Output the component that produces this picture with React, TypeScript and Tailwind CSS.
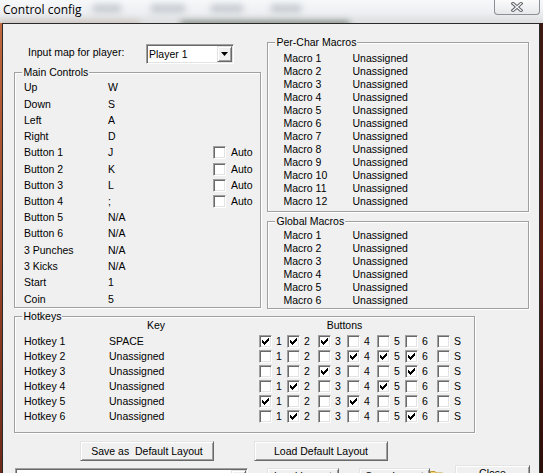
import React from "react";

function Check({ on }: { on?: boolean }) {
  return (
    <div className="relative w-[13px] h-[13px] shrink-0 bg-white border border-t-[#a0a0a0] border-l-[#a0a0a0] border-r-white border-b-white shadow-[inset_1px_1px_0_#696969,inset_-1px_-1px_0_#e3e3e3]">
      {on && (
        <svg className="absolute left-[2px] top-[2px]" width="7" height="7" viewBox="0 0 7 7" shapeRendering="crispEdges">
          <rect x="6" y="0" width="1" height="1" fill="#000" />
          <rect x="5" y="1" width="2" height="1" fill="#000" />
          <rect x="0" y="2" width="1" height="1" fill="#000" />
          <rect x="4" y="2" width="3" height="1" fill="#000" />
          <rect x="0" y="3" width="2" height="1" fill="#000" />
          <rect x="3" y="3" width="3" height="1" fill="#000" />
          <rect x="0" y="4" width="5" height="1" fill="#000" />
          <rect x="1" y="5" width="3" height="1" fill="#000" />
          <rect x="2" y="6" width="1" height="1" fill="#000" />
        </svg>
      )}
    </div>
  );
}

function GroupBox({ title, className, children }: { title: string; className: string; children?: React.ReactNode }) {
  return (
    <div className={"relative border border-[#a0a0a0] shadow-[inset_1px_1px_0_#fff,1px_1px_0_#fff] " + className}>
      <span className="absolute left-[7px] top-[-7px] pl-[1.5px] pr-[1px] bg-[#f0f0f0] leading-[13px] whitespace-nowrap">{title}</span>
      {children}
    </div>
  );
}

function DropBtn() {
  return (
    <div className="mt-[1px] mr-[1px] w-[15px] h-[16px] flex items-center justify-center bg-[#f0f0f0] border border-t-[#e3e3e3] border-l-[#e3e3e3] border-r-[#696969] border-b-[#696969] shadow-[inset_1px_1px_0_#fff,inset_-1px_-1px_0_#a0a0a0]">
      <svg width="7" height="4" viewBox="0 0 7 4">
        <path d="M0 0 H7 L3.5 4 Z" fill="#000" />
      </svg>
    </div>
  );
}

function Combo({ text, className }: { text: string; className: string }) {
  return (
    <div className={"flex bg-white border border-t-[#a0a0a0] border-l-[#a0a0a0] border-r-white border-b-white shadow-[inset_1px_1px_0_#696969,inset_-1px_-1px_0_#e3e3e3] " + className}>
      <div className="flex-1 pl-[2px] pt-[3px] whitespace-nowrap">{text}</div>
      <DropBtn />
    </div>
  );
}

function PushBtn({ label, className }: { label: string; className: string }) {
  return (
    <div className={"flex justify-center bg-[#f0f0f0] border border-t-[#e3e3e3] border-l-[#e3e3e3] border-r-[#696969] border-b-[#696969] shadow-[inset_1px_1px_0_#fff,inset_-1px_-1px_0_#a0a0a0] whitespace-pre " + className}>
      {label}
    </div>
  );
}

const mainRows: { l: string; k: string; auto?: boolean; tall?: boolean }[] = [
  { l: "Up", k: "W", tall: true },
  { l: "Down", k: "S" },
  { l: "Left", k: "A" },
  { l: "Right", k: "D" },
  { l: "Button 1", k: "J", auto: true, tall: true },
  { l: "Button 2", k: "K", auto: true },
  { l: "Button 3", k: "L", auto: true },
  { l: "Button 4", k: ";", auto: true },
  { l: "Button 5", k: "N/A" },
  { l: "Button 6", k: "N/A", tall: true },
  { l: "3 Punches", k: "N/A" },
  { l: "3 Kicks", k: "N/A" },
  { l: "Start", k: "1", tall: true },
  { l: "Coin", k: "5" },
];

const hotkeys: [string, string, number[]][] = [
  ["Hotkey 1", "SPACE", [1, 1, 1, 0, 0, 0, 0]],
  ["Hotkey 2", "Unassigned", [0, 0, 0, 1, 1, 1, 0]],
  ["Hotkey 3", "Unassigned", [0, 0, 1, 0, 0, 1, 0]],
  ["Hotkey 4", "Unassigned", [0, 1, 0, 0, 1, 0, 0]],
  ["Hotkey 5", "Unassigned", [1, 0, 0, 1, 0, 0, 0]],
  ["Hotkey 6", "Unassigned", [0, 1, 0, 0, 0, 1, 0]],
];

const cellW = ["w-[28px]", "w-[31px]", "w-[29px]", "w-[30px]", "w-[28px]", "w-[32px]", "w-[20px]"];
const digits = ["1", "2", "3", "4", "5", "6", "S"];

export default function App() {
  const perChar = Array.from({ length: 12 }, (_, i) => i + 1);
  const global = Array.from({ length: 6 }, (_, i) => i + 1);
  return (
    <div className="relative w-[543px] h-[473px] overflow-hidden bg-[#f0f0f0] font-['Liberation_Sans',Arial,sans-serif] text-[10.5px] leading-[13px] text-black">
      {/* title bar */}
      <div className="relative flex h-[23px] overflow-hidden bg-gradient-to-b from-[#f6f8fa] via-[#eef0f3] to-[#dcdedf]">
        <div className="absolute left-[92px] top-[4px] w-[30px] h-[9px] rounded-full bg-[#a4aab2] opacity-50 blur-[3px]" />
        <div className="absolute left-[150px] top-[4px] w-[36px] h-[9px] rounded-full bg-[#a4aab2] opacity-50 blur-[3px]" />
        <div className="absolute left-[210px] top-[4px] w-[34px] h-[9px] rounded-full bg-[#a4aab2] opacity-50 blur-[3px]" />
        <div className="absolute left-[270px] top-[4px] w-[32px] h-[9px] rounded-full bg-[#a4aab2] opacity-50 blur-[3px]" />
        <div className="absolute left-[180px] top-[21px] w-[170px] h-[6px] rounded-full bg-[#3c4a3a] opacity-60 blur-[3px]" />
        <div className="absolute left-[0px] top-[21px] w-[140px] h-[5px] bg-[#a07058] opacity-30 blur-[3px]" />
        <div className="relative flex-1 pl-[3px] pt-[1.5px] font-['Open_Sans',sans-serif] text-[12px] leading-[16px] text-black">Control config</div>
        <div className="relative mr-[3px] w-[46px] h-[15px] flex items-center justify-center rounded-b-[4px] border border-t-0 border-[#8c9096] bg-gradient-to-b from-[#fbfbfc] to-[#e6e8ea]">
          <svg width="12" height="10" viewBox="0 0 12 10">
            <path d="M2 1.5 L10 8.5 M10 1.5 L2 8.5" stroke="#5e6268" strokeWidth="3.2" strokeLinecap="square" fill="none" />
            <path d="M2 1.5 L10 8.5 M10 1.5 L2 8.5" stroke="#f6f6f6" strokeWidth="1.3" strokeLinecap="square" fill="none" />
          </svg>
        </div>
      </div>

      {/* body */}
      <div className="flex h-[450px]">
        <div className="w-[2px] bg-gradient-to-b from-[#c0683e] via-[#9a4628] to-[#6e2a18]" />
        <div className="flex-1 flex flex-col border-l border-t border-r border-[#2a2a2a] bg-[#f0f0f0]">
          <div className="flex items-start gap-[6px] pl-[11px] pr-[10px]">
            {/* left column */}
            <div className="w-[247px] flex flex-col">
              <div className="mt-[20px] flex h-[20px]">
                <div className="w-[132px] pl-[14px] pt-[2px] whitespace-nowrap">Input map for player:</div>
                <Combo text="Player 1" className="w-[88px] h-[20px]" />
              </div>
              <GroupBox title="Main Controls" className="mt-[8px] h-[236px] pt-[8px]">
                {mainRows.map((r) => (
                  <div key={r.l} className={"flex pl-[9px] " + (r.tall ? "h-[17px]" : "h-[16px]")}>
                    <div className="w-[84px] whitespace-nowrap">{r.l}</div>
                    <div className="w-[105px]">{r.k}</div>
                    {r.auto && (
                      <>
                        <Check />
                        <span className="ml-[5px]">Auto</span>
                      </>
                    )}
                  </div>
                ))}
              </GroupBox>
            </div>

            {/* right column */}
            <div className="w-[262px] flex flex-col">
              <GroupBox title="Per-Char Macros" className="mt-[18px] h-[170px] pt-[8.5px]">
                {perChar.map((n) => (
                  <div key={n} className="flex h-[13px] pl-[15.5px]">
                    <div className="w-[69px]">Macro {n}</div>
                    <div>Unassigned</div>
                  </div>
                ))}
              </GroupBox>
              <GroupBox title="Global Macros" className="mt-[9px] h-[88px] pt-[6.5px]">
                {global.map((n) => (
                  <div key={n} className="flex h-[13px] pl-[15.5px]">
                    <div className="w-[69px]">Macro {n}</div>
                    <div>Unassigned</div>
                  </div>
                ))}
              </GroupBox>
            </div>
          </div>

          {/* hotkeys */}
          <GroupBox title="Hotkeys" className="ml-[11px] mt-[7px] w-[461px] h-[117px] shrink-0">
            <div className="flex mt-[2px] h-[13px]">
              <div className="ml-[94px] w-[94px] text-center">Key</div>
              <div className="ml-[56px] w-[171px] text-center">Buttons</div>
            </div>
            <div className="mt-[2px] flex flex-col">
              {hotkeys.map(([name, key, checks]) => (
                <div key={name} className="flex items-center h-[15px] pl-[9px]">
                  <div className="w-[85px] whitespace-nowrap">{name}</div>
                  <div className="w-[150px]">{key}</div>
                  {checks.map((c, i) => (
                    <div key={i} className={"flex items-center " + cellW[i]}>
                      <Check on={c === 1} />
                      <span className="ml-[4px]">{digits[i]}</span>
                    </div>
                  ))}
                </div>
              ))}
            </div>
          </GroupBox>

          {/* default layout buttons */}
          <div className="flex mt-[8px] pl-[77px] gap-[40px] shrink-0">
            <PushBtn label="Save as  Default Layout" className="w-[134px] h-[20px] items-center" />
            <PushBtn label="Load Default Layout" className="w-[134px] h-[20px] items-center" />
          </div>

          {/* bottom row */}
          <div className="flex items-start mt-[7px] shrink-0">
            <Combo text="" className="ml-[12px] w-[233px] h-[21px]" />
            <PushBtn label="Load Layout" className="ml-[19px] w-[72px] h-[23px] items-start pt-[1px]" />
            <PushBtn label="Save Layout" className="ml-[20px] w-[71px] h-[23px] items-start pt-[1px]" />
            <svg className="mt-[2px]" width="14" height="12" viewBox="0 0 14 12">
              <path d="M0.5 1.5 H5 L6.5 3 H12.5 V11.5 H0.5 Z" fill="#f2d477" stroke="#c09a30" />
            </svg>
            <PushBtn label="Close" className="ml-[11px] -mt-[3px] w-[75px] h-[24px] items-start pt-[1px]" />
          </div>
        </div>
        <div className="w-[3px] bg-gradient-to-b from-[#3a1810] via-[#5c1c12] to-[#2a0e08]" />
      </div>
    </div>
  );
}
